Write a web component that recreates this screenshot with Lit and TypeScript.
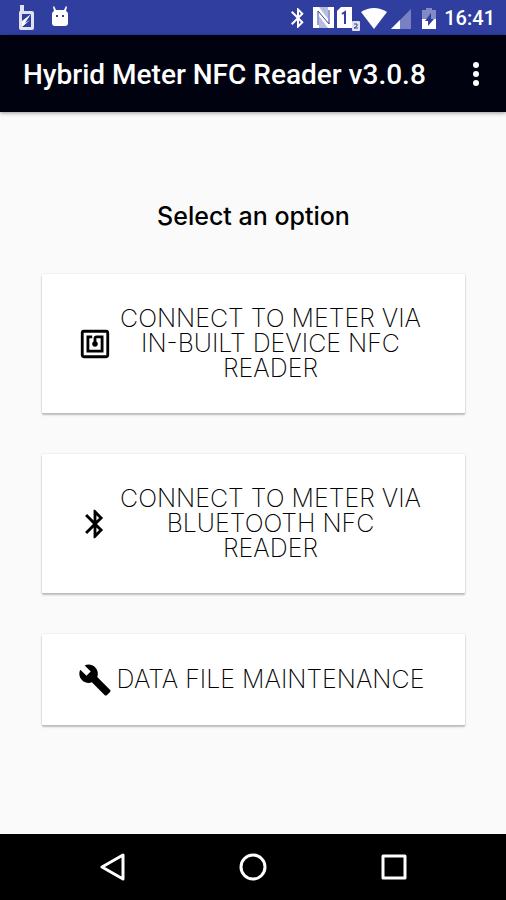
import { LitElement, html, svg, css } from "lit";
import { customElement } from "lit/decorators.js";

const NFC = svg`<path d="M20 2H4c-1.1 0-2 .9-2 2v16c0 1.1.9 2 2 2h16c1.1 0 2-.9 2-2V4c0-1.1-.9-2-2-2zm0 18H4V4h16v16zM18 6h-5c-1.1 0-2 .9-2 2v2.280c-.6.35-1 .98-1 1.720 0 1.100.9 2 2 2s2-.9 2-2c0-.74-.4-1.380-1-1.720V8h3v8H8V8h2V6H6v12h12V6z"/>`;
const BLUETOOTH = svg`<path d="M17.710 7.710L12 2h-1v7.590L6.410 5 5 6.410 10.590 12 5 17.590 6.410 19 11 14.410V22h1l5.710-5.710-4.300-4.290 4.300-4.290zM13 5.830l1.880 1.880L13 9.590V5.830zm1.880 10.460L13 18.170v-3.760l1.880 1.880z"/>`;
const WRENCH = svg`<path d="M22.700 19l-9.100-9.100c.9-2.300.4-5-1.500-6.900-2-2-5-2.400-7.400-1.300L9 6 6 9 1.600 4.700C.4 7.100.9 10.100 2.900 12.100c1.900 1.900 4.600 2.400 6.900 1.500l9.100 9.100c.4.4 1 .4 1.400 0l2.300-2.300c.5-.4.5-1.100.1-1.400z"/>`;

const OPTIONS = [
  { icon: NFC, label: "CONNECT TO METER VIA\nIN-BUILT DEVICE NFC\nREADER" },
  { icon: BLUETOOTH, label: "CONNECT TO METER VIA\nBLUETOOTH NFC\nREADER" },
  { icon: WRENCH, label: "DATA FILE MAINTENANCE" },
];

@customElement("app-root")
export class AppRoot extends LitElement {
  static styles = css`
    :host {
      display: flex;
      flex-direction: column;
      min-height: 100vh;
      background: #fafafa;
      color: #000;
      font-family: Roboto, sans-serif;
    }
    button {
      border: 0;
      margin: 0;
      padding: 0;
      background: none;
      color: inherit;
      font: inherit;
      cursor: pointer;
    }
    svg {
      display: block;
      flex: none;
      fill: currentColor;
    }
    .status {
      display: flex;
      align-items: center;
      justify-content: space-between;
      height: 35px;
      padding: 0 11px 0 18px;
      background: #303f9f;
      color: #fff;
    }
    .notices {
      display: flex;
      gap: 16px;
    }
    .system {
      display: flex;
      align-items: center;
    }
    .clock {
      margin-left: 2px;
      font-size: 20px;
      font-weight: 500;
      line-height: 24px;
    }
    .bar {
      display: flex;
      align-items: center;
      justify-content: space-between;
      height: 77px;
      padding: 2px 14px 0 23px;
      box-sizing: border-box;
      background: #01020f;
      color: #fff;
      box-shadow: 0 1px 4px rgba(0, 0, 0, 0.4);
    }
    h1 {
      margin: 0;
      font-size: 28px;
      font-weight: 500;
      line-height: 32px;
    }
    main {
      flex: 1;
      display: flex;
      flex-direction: column;
      gap: 41px;
      padding: 88px 41px 41px 42px;
    }
    h2 {
      margin: 0;
      font-family: Inter, sans-serif;
      font-size: 25px;
      font-weight: 500;
      line-height: 33px;
      text-align: center;
    }
    .option {
      display: flex;
      align-items: center;
      min-height: 91px;
      padding: 28px 36px;
      border-radius: 1px;
      background: #fff;
      box-shadow: 0 2px 2px rgba(0, 0, 0, 0.24), 0 0 2px rgba(0, 0, 0, 0.14);
    }
    .label {
      flex: 1;
      padding: 4px 0;
      font-family: Inter, sans-serif;
      font-size: 25px;
      font-weight: 200;
      line-height: 25px;
      text-align: center;
      white-space: pre-line;
    }
    .nav {
      display: grid;
      grid-template-columns: repeat(3, 1fr);
      height: 66px;
      padding: 0 42px;
      background: #000;
      color: #fff;
    }
    .nav button {
      display: grid;
      place-items: center;
    }
    .line {
      fill: none;
      stroke: currentColor;
      stroke-width: 3;
      stroke-linejoin: round;
    }
  `;

  render() {
    return html`
      <div class="status">
        <div class="notices">
          <svg width="17" height="27" viewBox="0 0 17 27">
            <path fill-rule="evenodd" d="M2 1h4v6h8q2 0 2 2v15q0 2-2 2H3q-2 0-2-2V9q0-2 1-2zM4 10v13h9V10z" opacity=".85" />
            <path d="M4 17l9-7-6 9 5-3-8 7z" />
          </svg>
          <svg width="18" height="27" viewBox="0 0 18 27">
            <path fill-rule="evenodd" d="M3 2l2 4h8l2-4 1 1-1 4q2 1 2 3v9q0 3-3 3H4q-3 0-3-3v-9q0-2 2-3L2 3zM5 11v2h2v-2zm6 0v2h2v-2z" />
          </svg>
        </div>
        <div class="system">
          <svg width="24" height="24" viewBox="0 0 24 24">${BLUETOOTH}</svg>
          <svg width="50" height="28" viewBox="6 0 50 28">
            <path d="M9 3h6l9 12V3h6v21h-6L15 12v12H9z" />
            <path d="M9 3h21v21H9z" opacity=".65" />
            <path fill="none" stroke="#303f9f" stroke-width="1" d="M14 21V7l11 13V6" />
            <path d="M37 3h11v21H33V7z" />
            <path fill="none" stroke="#303f9f" stroke-width="2" d="M38 10l3-2v12" />
            <rect x="48" y="17" width="8" height="10" rx="1" opacity=".85" />
            <path fill="none" stroke="#303f9f" d="M50 20h3v2l-3 2h4" />
          </svg>
          <svg width="28" height="24" viewBox="0 0 28 24">
            <path d="M1 6Q14-2 27 6L14 23z" />
          </svg>
          <svg width="24" height="24" viewBox="0 0 24 24">
            <path d="M23 3v20H3z" opacity=".35" />
            <path d="M12 14v9H3z" />
          </svg>
          <svg width="30" height="24" viewBox="4 0 30 24">
            <path d="M14 4h4V2h6v2h4v9H14z" opacity=".4" />
            <path d="M14 13h14v10H14z" />
            <path fill="#303f9f" d="M23 7l-6 8h3v5l6-7h-3z" />
          </svg>
          <span class="clock">16:41</span>
        </div>
      </div>
      <header class="bar">
        <h1>Hybrid Meter NFC Reader v3.0.8</h1>
        <button aria-label="More options">
          <svg width="32" height="32" viewBox="0 0 32 32">
            <circle cx="16" cy="6" r="3" />
            <circle cx="16" cy="15" r="3" />
            <circle cx="16" cy="24" r="3" />
          </svg>
        </button>
      </header>
      <main>
        <h2>Select an option</h2>
        ${OPTIONS.map(
          (o) => html`<button class="option">
            <svg width="34" height="34" viewBox="0 0 24 24">${o.icon}</svg>
            <span class="label">${o.label}</span>
          </button>`
        )}
      </main>
      <nav class="nav">
        <button aria-label="Back">
          <svg class="line" width="28" height="28" viewBox="0 0 28 28"><path d="M4 14L25 2v24z" /></svg>
        </button>
        <button aria-label="Home">
          <svg class="line" width="28" height="28" viewBox="0 0 28 28"><circle cx="14" cy="14" r="12" /></svg>
        </button>
        <button aria-label="Recent apps">
          <svg class="line" width="28" height="28" viewBox="0 0 28 28"><rect x="3" y="3" width="22" height="22" /></svg>
        </button>
      </nav>
    `;
  }
}
